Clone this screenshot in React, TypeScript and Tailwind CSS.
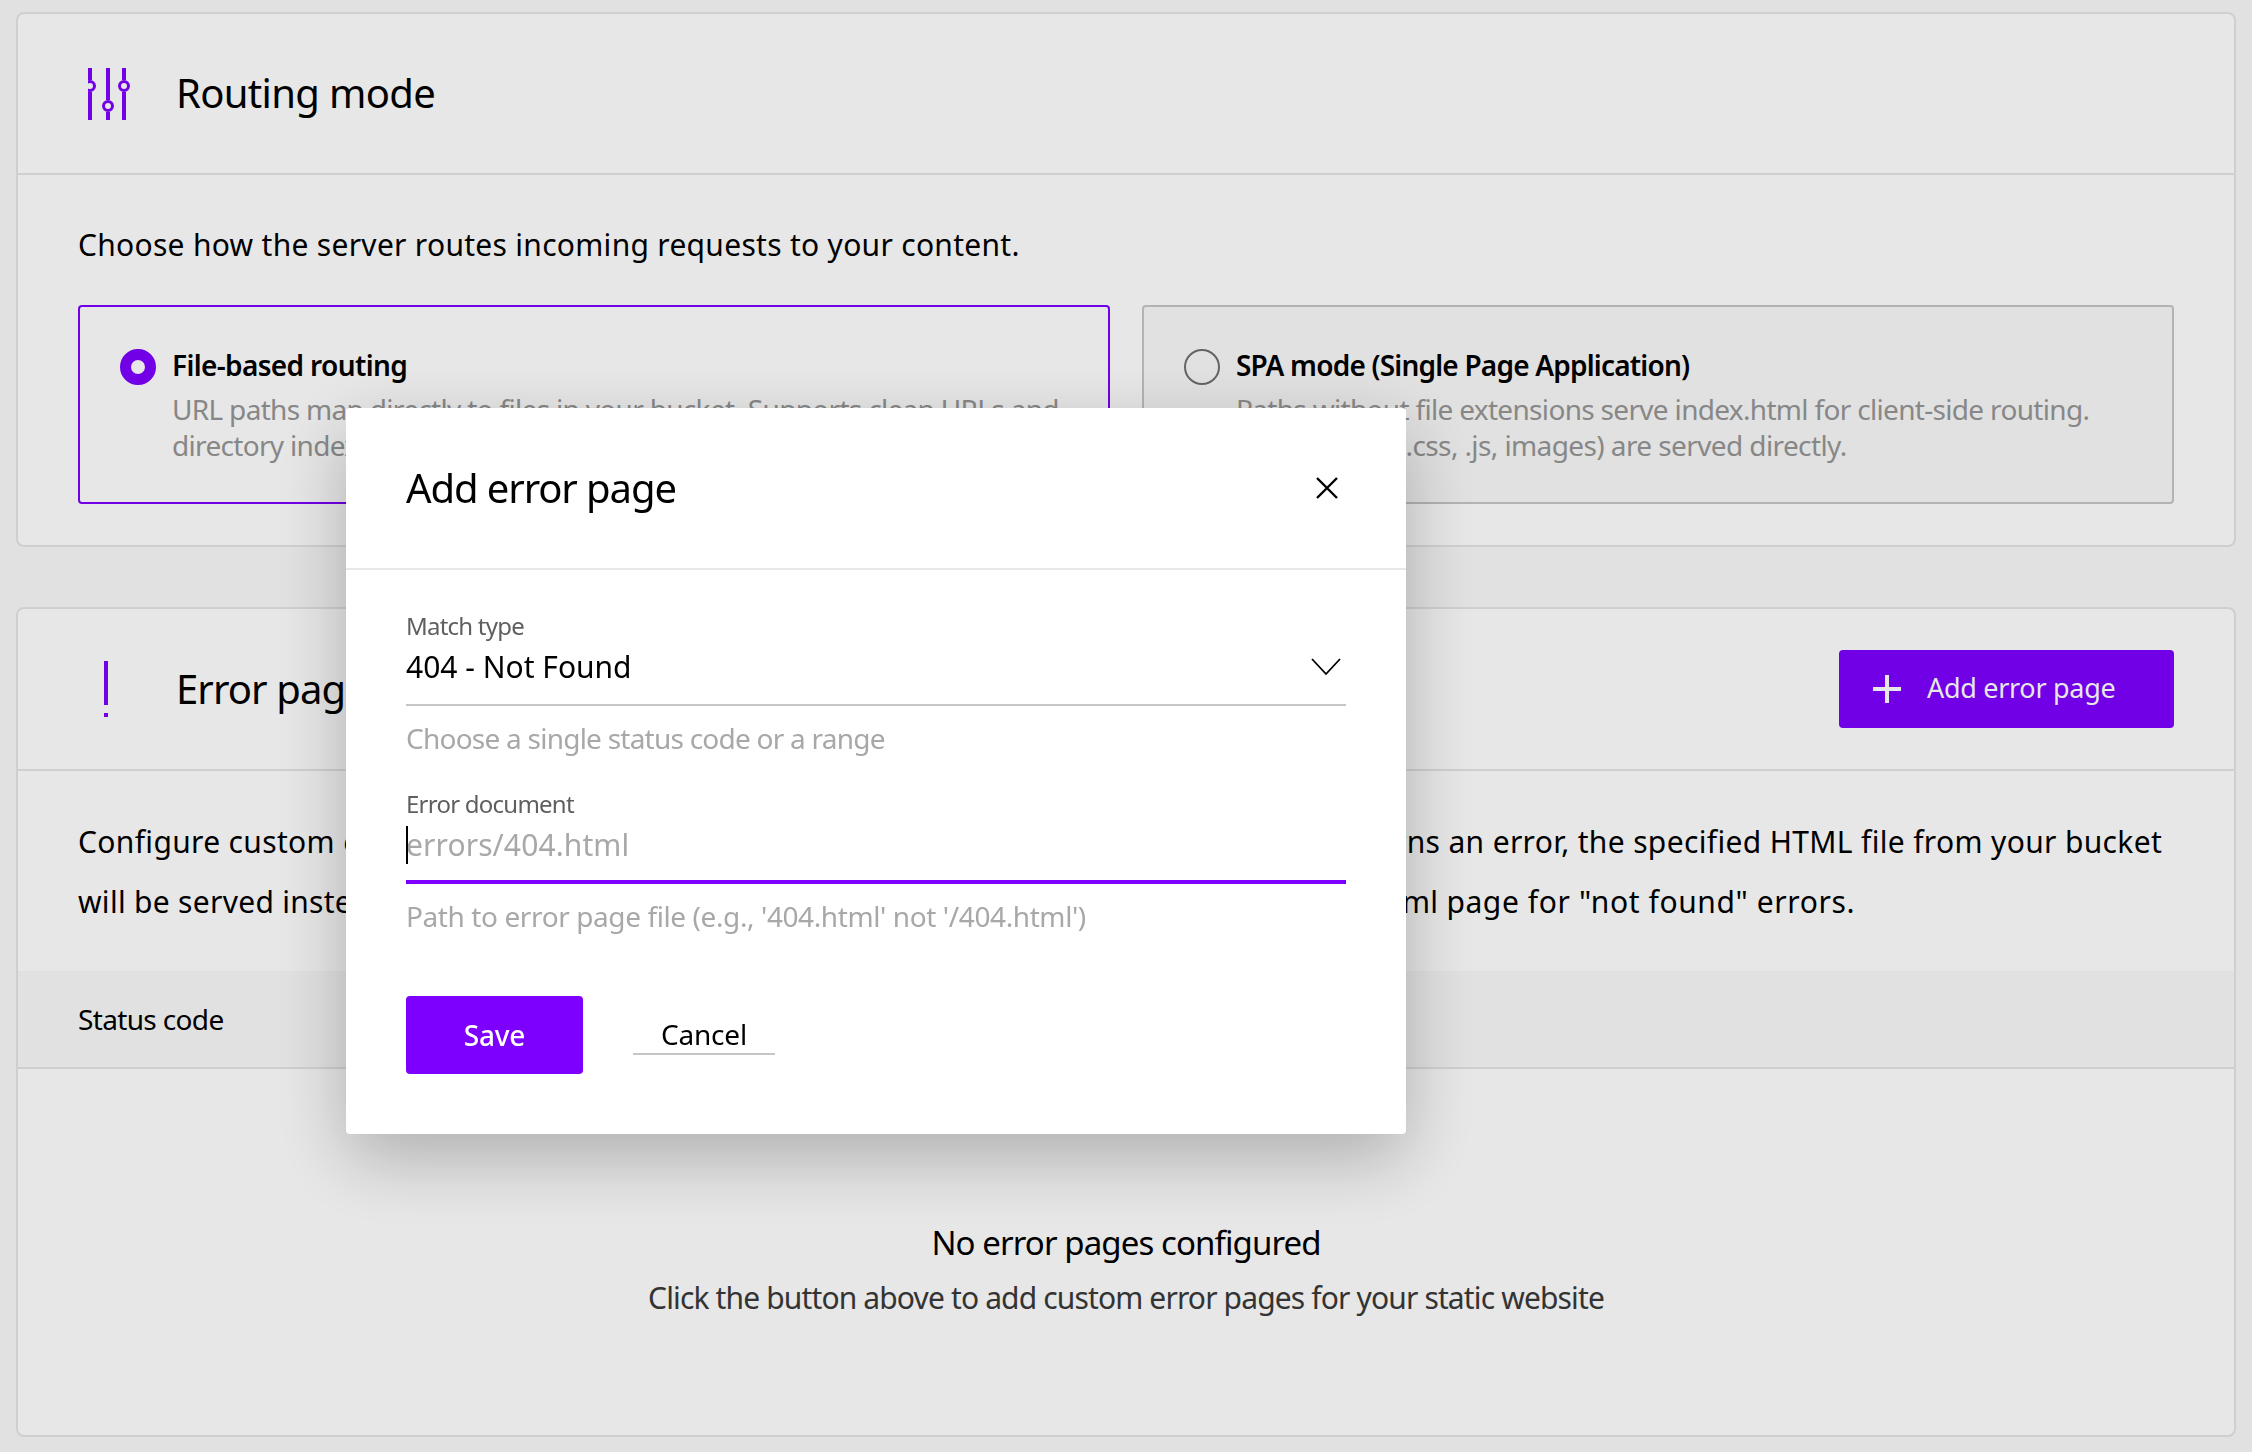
import React from 'react';

function SlidersIcon() {
  return (
    <svg width="52" height="52" viewBox="0 0 52 52" fill="none" className="text-[#7d00ff] shrink-0">
      <path d="M2 0V12M2 24V52M20 0V32M20 44V52M36 0V12M36 24V52" stroke="currentColor" strokeWidth="4" />
      <circle cx="2" cy="18" r="4.5" stroke="currentColor" strokeWidth="3" />
      <circle cx="20" cy="38" r="4.5" stroke="currentColor" strokeWidth="3" />
      <circle cx="36" cy="18" r="4.5" stroke="currentColor" strokeWidth="3" />
    </svg>
  );
}

function AlertIcon() {
  return (
    <svg width="52" height="56" viewBox="0 0 52 56" fill="none" className="text-[#7d00ff] shrink-0">
      <rect x="16" y="0" width="4" height="44" fill="currentColor" />
      <rect x="16" y="52" width="4" height="4" fill="currentColor" />
    </svg>
  );
}

function Modal() {
  return (
    <div className="fixed inset-0 bg-black/[0.094] pl-[346px] pt-[408px]">
      <div className="w-[1060px] h-[726px] bg-white rounded shadow-[0_24px_72px_rgba(0,0,0,0.25)]">
        <div className="h-[162px] border-b-2 border-[#e8e8e8] pl-[60px] pr-[68px] flex items-center justify-between">
          <h2 className="text-[40px] leading-[52px] text-black tracking-[-1.1px]">Add error page</h2>
          <svg width="22" height="22" viewBox="0 0 22 22" fill="none" stroke="black" strokeWidth="2.4">
            <path d="M1 1L21 21M21 1L1 21" />
          </svg>
        </div>
        <div className="px-[60px] pt-[41px]">
          <div className="text-[24px] leading-[30px] text-[#5f5f5f] tracking-[-0.78px]">Match type</div>
          <div className="h-[65px] border-b-2 border-[#c6c6c6] flex items-start justify-between">
            <span className="text-[30px] leading-[52px] text-black">404 - Not Found</span>
            <svg width="30" height="18" viewBox="0 0 30 18" fill="none" stroke="black" strokeWidth="1.8" className="mt-[17px] mr-[5px]">
              <path d="M1 1L15 16L29 1" />
            </svg>
          </div>
          <div className="mt-[14px] text-[28px] leading-[36px] text-[#a8a8a8] tracking-[-0.76px]">Choose a single status code or a range</div>
          <div className="mt-[33px] text-[24px] leading-[30px] text-[#5f5f5f] tracking-[-0.76px]">Error document</div>
          <div className="relative h-[65px] border-b-4 border-[#7d00ff]">
            <span className="block text-[30px] leading-[52px] text-[#a8a8a8] tracking-[0.1px]">errors/404.html</span>
            <span className="absolute left-0 top-[7px] w-[2px] h-[38px] bg-black" />
          </div>
          <div className="mt-[14px] text-[28px] leading-[36px] text-[#a8a8a8] tracking-[-0.4px]">Path to error page file (e.g., '404.html' not '/404.html')</div>
          <div className="mt-[62px] flex items-start gap-[50px]">
            <button className="w-[177px] h-[78px] bg-[#7d00ff] rounded text-white text-[28px] font-medium tracking-[-0.2px]">Save</button>
            <button className="h-[59px] px-[28px] pt-[19px] border-b-2 border-[#c6c6c6] text-[28px] leading-[36px] text-black tracking-[-0.2px]">Cancel</button>
          </div>
        </div>
      </div>
    </div>
  );
}

export default function App() {
  return (
    <div className="h-[1452px] overflow-hidden bg-[#f9f9f9] px-4 pt-3 font-['Noto_Sans',sans-serif] text-black">
      <section className="h-[535px] bg-white border-2 border-[#e5e5e5] rounded-lg">
        <div className="h-[161px] border-b-2 border-[#e5e5e5] pl-[70px] flex items-center gap-[36px]">
          <SlidersIcon />
          <h2 className="-mt-[2px] text-[40px] leading-[52px] tracking-[-0.66px]">Routing mode</h2>
        </div>
        <div className="px-[60px] pt-[40px]">
          <p className="text-[30px] leading-[60px] tracking-[0.29px]">Choose how the server routes incoming requests to your content.</p>
          <div className="mt-[30px] grid grid-cols-2 gap-8">
            <div className="h-[199px] border-2 border-[#7d00ff] rounded bg-white pl-[40px] pt-[40px] flex gap-4">
              <div className="mt-[2px] w-9 h-9 rounded-full border-[11px] border-[#7d00ff] bg-white shrink-0" />
              <div>
                <div className="text-[28px] leading-[36px] font-semibold tracking-[-0.64px]">File-based routing</div>
                <div className="mt-[8px] text-[28px] leading-[36px] text-[#969696] tracking-[-0.68px]">
                  URL paths map directly to files in your bucket. Supports clean URLs and<br />directory index files.
                </div>
              </div>
            </div>
            <div className="h-[199px] border-2 border-[#c6c6c6] rounded bg-[#f9f9f9] pl-[40px] pt-[40px] flex gap-4">
              <div className="mt-[2px] w-9 h-9 rounded-full border-2 border-[#6f6f6f] shrink-0" />
              <div>
                <div className="text-[28px] leading-[36px] font-semibold tracking-[-0.8px]">SPA mode (Single Page Application)</div>
                <div className="mt-[8px] text-[28px] leading-[36px] text-[#969696] tracking-[-0.68px]">
                  Paths without file extensions serve index.html for client-side routing.<br />
                  <span className="tracking-[-0.6px]">Existing files (.css, .js, images) are served directly.</span>
                </div>
              </div>
            </div>
          </div>
        </div>
      </section>

      <section className="mt-[60px] h-[830px] bg-white border-2 border-[#e5e5e5] rounded-lg flex flex-col">
        <div className="h-[162px] shrink-0 border-b-2 border-[#e5e5e5] pl-[70px] pr-[60px] flex items-center">
          <AlertIcon />
          <h2 className="ml-[36px] text-[40px] leading-[52px] tracking-[-0.9px]">Error pages</h2>
          <button className="ml-auto w-[335px] h-[78px] bg-[#7d00ff] rounded text-white pl-[34px] flex items-center gap-[26px]">
            <svg width="28" height="28" viewBox="0 0 28 28" fill="currentColor" className="shrink-0">
              <rect x="12" y="0" width="4" height="28" />
              <rect x="0" y="12" width="28" height="4" />
            </svg>
            <span className="text-[27px] -translate-y-[1px] tracking-[-0.3px]">Add error page</span>
          </button>
        </div>
        <div className="px-[60px] pt-[41px] pb-[39px]">
          <p className="text-[30px] leading-[60px] tracking-[0.29px] whitespace-nowrap">
            <span className="tracking-[0.34px]">Configure custom error pages for your static website. When a request for your website returns an error, the specified HTML file from your bucket</span><br />
            will be served instead of the standard response. For example, you can serve a custom 404.html{' '}
            <span className="tracking-[0.6px]">page for "not found" errors.</span>
          </p>
        </div>
        <div className="h-[98px] shrink-0 bg-[#f9f9f9] border-b-2 border-[#e5e5e5] px-[60px] flex items-center">
          <span className="text-[28px] tracking-[-0.65px]">Status code</span>
        </div>
        <div className="pt-[150px] text-center">
          <div className="text-[33px] leading-[48px] tracking-[-0.9px]">No error pages configured</div>
          <div className="mt-[11px] text-[30px] leading-[40px] text-[#393939] tracking-[-0.86px]">Click the button above to add custom error pages for your static website</div>
        </div>
      </section>

      <Modal />
    </div>
  );
}
